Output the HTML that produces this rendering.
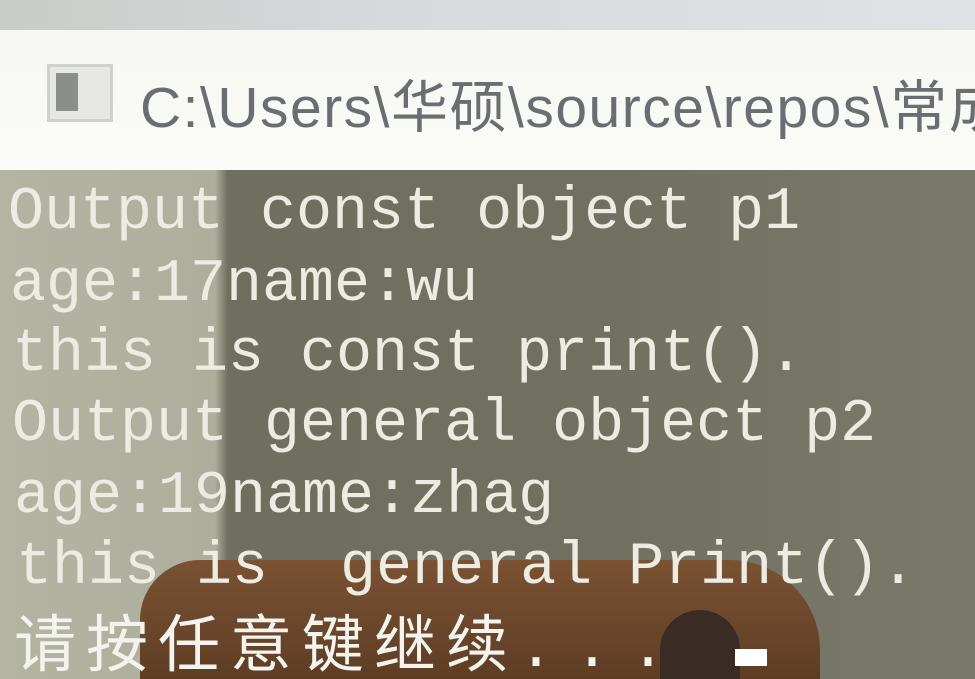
<!DOCTYPE html>
<html><head><meta charset="utf-8"><style>
html,body{margin:0;padding:0;width:975px;height:679px;overflow:hidden;background:#777766;position:relative}
.top{position:absolute;left:0;top:0;width:975px;height:30px;background:linear-gradient(90deg,#c9ccc8 0,#d6dadc 40%,#dfe3e6 100%)}
.title{position:absolute;left:0;top:30px;width:975px;height:140px;background:linear-gradient(180deg,#f6f7f2,#fbfbf8)}
.t{position:absolute;left:140px;top:32px;font:57px "Liberation Sans","Noto Sans CJK SC",sans-serif;color:#6a6e72;white-space:nowrap;letter-spacing:1.5px}
.ico{position:absolute;left:47px;top:34px;width:60px;height:52px;border:3px solid #cfd1cf;background:#e7e8e5}
.ico:after{content:"";position:absolute;left:6px;top:6px;width:22px;height:38px;background:#8c8e8c}
.con{position:absolute;left:0;top:170px;width:975px;height:509px;background:linear-gradient(90deg,#b3b4a2 0,#aeae9c 215px,#6e6f5e 228px,#707060 60%,#7a7a6a 100%)}
.brown{position:absolute;left:140px;top:560px;width:680px;height:119px;border-radius:60px 90px 0 0;background:linear-gradient(180deg,#7a5233,#5e3d25)}
.dark{position:absolute;left:660px;top:610px;width:80px;height:69px;border-radius:40px 40px 0 0;background:#3a2c24}
.l{position:absolute;font:60px "Liberation Mono",monospace;color:#ecece2;white-space:pre;line-height:70px}
.cn{position:absolute;left:14px;top:604px;font:62px "Noto Sans CJK SC",sans-serif;color:#f4f4ee;letter-spacing:10px;white-space:nowrap;line-height:70px}
.cur{position:absolute;left:735px;top:649px;width:32px;height:17px;background:#fff}
</style></head><body>
<div class="top"></div>
<div class="title"><div class="ico"></div><div class="t">C:\Users\华硕\source\repos\常成</div></div>
<div class="con"></div>
<div class="brown"></div>
<div class="dark"></div>
<div class="l" style="left:8px;top:178px">Output const object p1</div>
<div class="l" style="left:10px;top:250px">age:17name:wu</div>
<div class="l" style="left:12px;top:320px">this is const print().</div>
<div class="l" style="left:12px;top:390px">Output general object p2</div>
<div class="l" style="left:14px;top:462px">age:19name:zhag</div>
<div class="l" style="left:16px;top:533px">this is  general Print().</div>
<div class="cn">请按任意键继续<span style="font-family:'Liberation Mono',monospace;font-size:60px;letter-spacing:20px">...</span></div>
<div class="cur"></div>
</body></html>
